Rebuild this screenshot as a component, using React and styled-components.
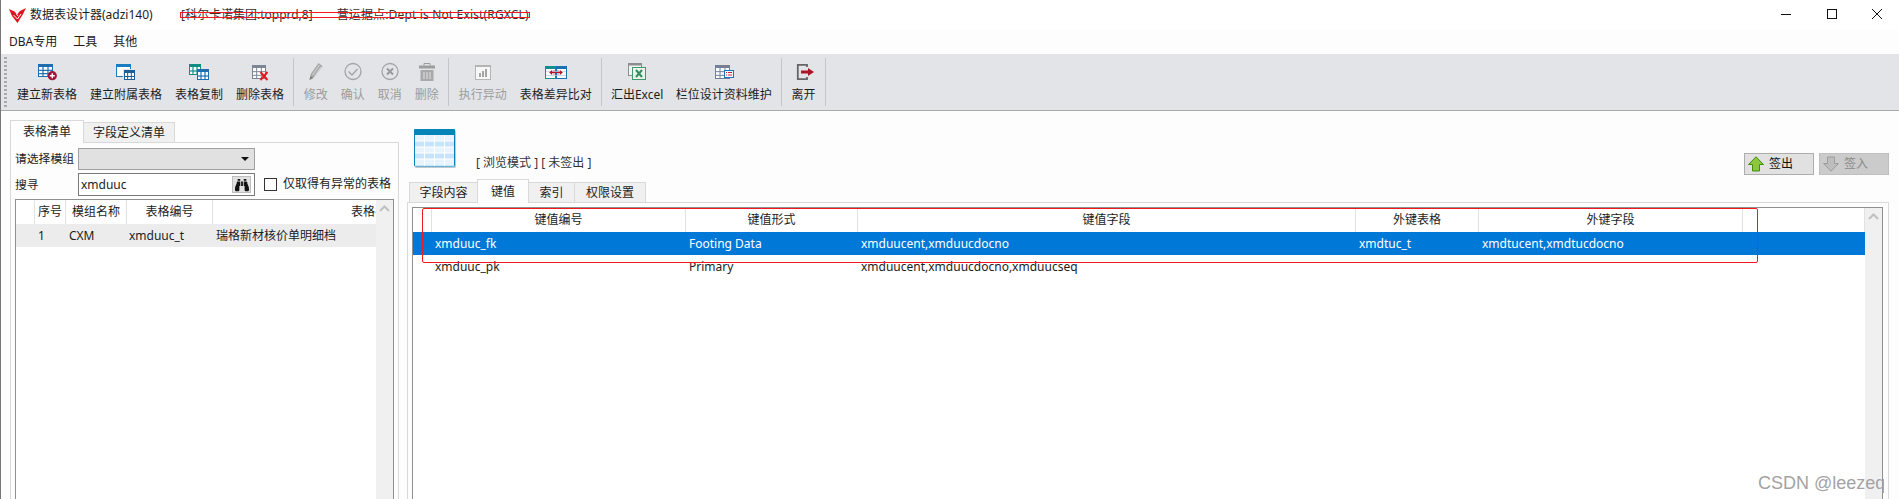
import React from 'react';
import styled, { createGlobalStyle } from 'styled-components';
import { FaBinoculars } from 'react-icons/fa';

const Global = createGlobalStyle`
  html, body { margin: 0; padding: 0; background: #fdfdfd; overflow: hidden; }
  * { box-sizing: border-box; }
`;

const Window = styled.div`
  position: relative; width: 1899px; height: 499px; overflow: hidden;
  display: flex; flex-direction: column; background: #fdfdfd;
  border-left: 1px solid #777;
  font: 12px/14px "Noto Sans", "Noto Sans CJK SC", sans-serif; color: #1c1c1c;
`;
const TitleBar = styled.div`
  height: 30px; flex: none; display: flex; align-items: center; background: #fff; padding-left: 8px;
`;
const AppTitle = styled.span`margin-left: 4px; width: 151px;`;
const TitleInfo = styled.span`margin-right: ${p => p.$gap || 0}px; color: #333; letter-spacing: ${p => p.$track || 0}px;`;
const WinControls = styled.div`margin: 0 0 2px auto; display: flex; gap: 35.5px; padding-right: 17px; align-items: center;`;
const MenuBar = styled.div`
  height: 24px; flex: none; display: flex; align-items: center; background: #fdfdfd; padding: 0 0 0 8px; gap: 16px;
`;
const MenuItem = styled.span``;
const Toolbar = styled.div`
  height: 57px; flex: none; display: flex; align-items: stretch; background: #e3e4e8;
  border-bottom: 1px solid #aaa; padding-left: 3px;
`;
const Grip = styled.div`
  width: 3px; margin: 3px 3.5px 3px 0;
  background: repeating-linear-gradient(to bottom, #a9aaad 0 2px, transparent 2px 4px);
`;
const ToolButton = styled.div`
  padding: 9px ${p => p.$pad ?? 6.5}px 0; display: flex; flex-direction: column; align-items: center;
  color: ${p => (p.$disabled ? '#9c9c9c' : '#1c1c1c')}; white-space: nowrap;
  svg { display: block; overflow: visible; }
`;
const ToolLabel = styled.span`margin-top: 7px;`;
const ToolSep = styled.div`width: 1px; height: 48px; margin: 4px 3.25px 0 2.5px; background: #c4c5c8;`;

const Body = styled.div`flex: 1; min-height: 0; display: flex; padding: 9px 0 0 9px; gap: 8px;`;
const LeftCol = styled.div`width: 389px; flex: none; display: flex; flex-direction: column;`;
const RightCol = styled.div`width: 1482px; flex: none; display: flex; flex-direction: column;`;

const Tabs = styled.div`
  display: flex; align-items: flex-end; height: ${p => p.$h}px; padding-left: ${p => p.$pad || 0}px;
  position: relative; z-index: 1; flex: none;
`;
const Tab = styled.div`
  width: ${p => p.$w}px; height: ${p => (p.$active ? p.$h + 2 : p.$h)}px;
  display: flex; align-items: center; justify-content: center;
  background: ${p => (p.$active ? '#fdfdfd' : '#f0f0f0')};
  border: 1px solid #d9d9d9; border-bottom: ${p => (p.$active ? 'none' : '1px solid #d9d9d9')};
  margin-right: -1px; ${p => (p.$active ? 'position: relative; z-index: 1;' : '')}
`;
const Panel = styled.div`
  flex: 1; min-height: 0; margin-bottom: -30px; margin-top: -1px; display: flex; flex-direction: column;
  border: 1px solid #d9d9d9; background: #fdfdfd; padding: ${p => p.$pad};
`;
const FieldRow = styled.div`
  display: flex; align-items: center; height: ${p => p.$h}px; margin-bottom: 3px; flex: none;
`;
const FieldLabel = styled.span`width: 63px; flex: none; white-space: nowrap; font-size: 11.8px; margin-bottom: 2px;`;
const Select = styled.div`
  width: 177px; height: 22px; background: #e1e1e1; border: 1px solid #a0a0a0;
  display: flex; align-items: center; justify-content: flex-end; padding-right: 5px;
`;
const Caret = styled.div`width: 0; height: 0; border: 4px solid transparent; border-top: 4px solid #111; border-bottom: none;`;
const SearchBox = styled.div`
  width: 177px; height: 23px; background: #fff; border: 1px solid #7a7a7a; display: flex; align-items: center;
  padding-left: 2px; justify-content: space-between;
`;
const SearchBtn = styled.div`
  width: 19px; height: 17px; margin-right: 3px; background: #e1e1e1; border: 1px solid #bdbdbd;
  display: flex; align-items: center; justify-content: center; color: #111;
`;
const CheckBox = styled.div`width: 13px; height: 13px; margin-left: 9px; background: #fff; border: 1px solid #333; flex: none;`;
const CheckLabel = styled.span`margin: 0 0 2px 6px; white-space: nowrap;`;

const Grid = styled.div`
  flex: 1; min-height: 0; display: flex; border: 1px solid #8e8f8f; background: #fff; overflow: hidden;
`;
const GridMain = styled.div`flex: 1; min-width: 0; overflow: hidden;`;
const ScrollBar = styled.div`
  width: 17px; flex: none; background: #f0f0f0; display: flex; justify-content: center; padding-top: 5px; align-items: flex-start;
`;
const Row = styled.div`
  display: grid; grid-template-columns: ${p => p.$cols}; height: ${p => p.$h || 23}px; align-items: center;
  background: ${p => p.$bg || 'transparent'}; color: ${p => p.$color || 'inherit'};
`;
const HeadCell = styled.div`
  height: 100%; display: flex; align-items: center; justify-content: center; white-space: nowrap;
  border-right: 1px solid #e2e2e2; overflow: hidden; color: #1c1c1c;
`;
const Cell = styled.div`padding-left: ${p => p.$pad ?? 3}px; white-space: nowrap; overflow: hidden;`;

const RightHead = styled.div`height: 59px; flex: none; display: flex; padding-left: 7px;`;
const BigIcon = styled.svg`margin-top: 9px; flex: none;`;
const ModeText = styled.span`margin: 36px 0 0 20px; color: #333; white-space: pre;`;
const CheckActions = styled.div`margin: 33px 0 0 auto; display: flex; gap: 5px;`;
const CheckBtn = styled.div`
  width: 70px; height: 22px; display: flex; align-items: center; padding-left: 3px; gap: 5px;
  background: ${p => (p.$disabled ? '#cbcbcb' : '#e1e1e1')};
  border: 1px solid ${p => (p.$disabled ? '#bfbfbf' : '#adadad')};
  color: ${p => (p.$disabled ? '#8a8a8a' : '#111')};
`;

const RedMark = styled.div`
  position: absolute; border: 1px solid #f5191e; pointer-events: none; z-index: 5;
  left: ${p => p.$x}px; top: ${p => p.$y}px; width: ${p => p.$w}px; height: ${p => p.$h}px; border-radius: ${p => p.$r || 0}px;
`;
const Watermark = styled.div`
  position: absolute; left: 1757px; top: 472px; width: 126px; overflow: hidden; white-space: nowrap; z-index: 6;
  font: 18px/22px "Liberation Sans", Arial, sans-serif; color: #a3a3a3;
`;

/* ---------- drawings ---------- */
const MiniTable = ({ x, y, w, h, c, cols = 3, rows = 2, head = 3, sw = 1 }) => {
  const v = [], r = [];
  for (let i = 1; i < cols; i++) v.push(x + (w * i) / cols);
  for (let i = 1; i < rows; i++) r.push(y + head + ((h - head) * i) / rows);
  return (
    <g>
      <rect x={x + 0.5} y={y + 0.5} width={w - 1} height={h - 1} fill="#fff" stroke={c} />
      <rect x={x} y={y} width={w} height={head} fill={c} />
      {v.map(a => <line key={a} x1={a} x2={a} y1={y + head} y2={y + h} stroke={c} strokeWidth={sw} />)}
      {r.map(a => <line key={a} x1={x} x2={x + w} y1={a} y2={a} stroke={c} strokeWidth={sw} />)}
    </g>
  );
};
const Ico = ({ children }) => <svg width="24" height="18" viewBox="0 0 24 18">{children}</svg>;

const NewTableIcon = () => <Ico>
  <MiniTable x={3} y={1} w={15} h={13} c="#1f6eb0" rows={3} sw={1.2} />
  <circle cx="17.3" cy="12.7" r="4.6" fill="#a5133a" />
  <path d="M14.800 12.700h5M17.300 10.200v5" stroke="#fff" strokeWidth="1.4" />
</Ico>;
const SubTableIcon = () => <Ico>
  <rect x="2.5" y="1.5" width="14" height="12" fill="#fff" stroke="#1b7cc0" />
  <rect x="2" y="1" width="15" height="3" fill="#1b7cc0" />
  <rect x="9" y="6" width="13" height="12" fill="#e3e4e8" />
  <MiniTable x={10} y={7} w={11} h={10} c="#1f5f99" head={3} />
</Ico>;
const CopyTableIcon = () => <Ico>
  <MiniTable x={2} y={1} w={12} h={11} c="#0f8f82" rows={2} sw={1.2} />
  <MiniTable x={10} y={6} w={12} h={11} c="#1f6eb0" rows={2} sw={1.2} />
</Ico>;
const DelTableIcon = () => <Ico>
  <MiniTable x={4} y={2} w={14} h={14} c="#7d8793" rows={3} head={3} />
  <path d="M12.500 9l7 8M19.500 9l-7 8" stroke="#e3151d" strokeWidth="1.9" />
</Ico>;
const PencilIcon = () => <Ico>
  <path d="M5.500 17l1.200-6L14.500 0 18.500 3l-7.500 10.500z" fill="#a9a9a9" />
  <path d="M5.500 17l1-4 3 2z" fill="#808080" />
  <path d="M8.500 12L15.500 2M10.500 13.500L17 4" stroke="#e3e4e8" strokeWidth=".8" />
</Ico>;
const OkIcon = () => <Ico>
  <circle cx="12" cy="8.500" r="8" fill="none" stroke="#a4a4a4" strokeWidth="1.3" />
  <path d="M7.500 8.500l3.500 3.500 5.500-6" fill="none" stroke="#a4a4a4" strokeWidth="1.4" />
</Ico>;
const CancelIcon = () => <Ico>
  <circle cx="12" cy="8.500" r="8" fill="none" stroke="#a4a4a4" strokeWidth="1.3" />
  <path d="M9 5.500l6 6M15 5.500l-6 6" stroke="#989898" strokeWidth="1.900" />
</Ico>;
const TrashIcon = () => <Ico>
  <path d="M9 2.500V.5h6v2" fill="none" stroke="#9c9c9c" />
  <rect x="4" y="2.500" width="16" height="3" fill="#9c9c9c" />
  <path d="M5.500 7h13v11h-13z" fill="#a9a9a9" />
  <path d="M9 9v7M12 9v7M15 9v7" stroke="#e3e4e8" />
</Ico>;
const ExecIcon = () => <Ico>
  <rect x="4.5" y="2.5" width="15" height="14" fill="#f7f7f7" stroke="#b4b4b4" />
  <rect x="4" y="2" width="16" height="2" fill="#b4b4b4" />
  <path d="M8 10h2v4H8zM11 8h2v6h-2zM14 6h2v8h-2z" fill="#a4a4a4" />
</Ico>;
const CompareIcon = () => <Ico>
  <rect x="1.5" y="3.5" width="10" height="12" fill="#fff" stroke="#10908c" />
  <rect x="1" y="3" width="11" height="3" fill="#10908c" />
  <rect x="12.5" y="3.5" width="10" height="12" fill="#fff" stroke="#1f6eb0" />
  <rect x="12" y="3" width="11" height="3" fill="#1f6eb0" />
  <path d="M2 8.500h20M2 12.500h20" stroke="#bcd" strokeWidth=".7" />
  <path d="M6 9.500h12" stroke="#b5152b" strokeWidth="1" />
  <path d="M8 7.500L5.500 9.500 8 11.500zM16 7.500l2.500 2-2.500 2zM10 7v5M14 7v5" fill="#b5152b" stroke="#b5152b" strokeWidth=".6" />
</Ico>;
const ExcelIcon = () => <Ico>
  <rect x="3.5" y="0.5" width="13" height="12" fill="#f3f3f3" stroke="#8d8d8d" />
  <rect x="3" y="0" width="14" height="2.5" fill="#8d8d8d" />
  <rect x="7.5" y="4.5" width="13" height="12" fill="#eaf4ee" stroke="#3f9b6e" />
  <path d="M11 7l6 7M17 7l-6 7" stroke="#2f8f5f" strokeWidth="2" />
</Ico>;
const FieldIcon = () => <Ico>
  <MiniTable x={3} y={2} w={15} h={14} c="#73809a" rows={3} cols={3} />
  <rect x="12.5" y="7.5" width="9" height="7" fill="#fff" stroke="#1574c4" />
  <path d="M14 9.500h1M16 9.500h4M14 12h1M16 12h4" stroke="#c2213c" strokeWidth="1" />
</Ico>;
const ExitIcon = () => <Ico>
  <path d="M15 4V1.800H5.800v14.400H15V14" fill="none" stroke="#666" strokeWidth="1.8" />
  <path d="M9 7.600h7V5l6 4-6 4v-2.600H9z" fill="#a8162a" />
</Ico>;
const Chevron = () => (
  <svg width="11" height="7" viewBox="0 0 11 7"><path d="M1 6l4.500-4.500L10 6" fill="none" stroke="#c0c0c0" strokeWidth="2" /></svg>
);
const Logo = () => (
  <svg width="17" height="15" viewBox="0 0 17 15">
    <path d="M0 1l5.500 2.500L8 6.500 11 3l6-3-3.500 7L8.500 15 3 8z" fill="#dc1420" />
    <path d="M4.500 7L8.500 11 12 6M7.500 6L9 8" fill="none" stroke="#fff" strokeWidth="1" />
  </svg>
);
const WinMin = () => <svg width="10" height="10"><path d="M0 5.500h10" stroke="#111" /></svg>;
const WinMax = () => <svg width="10" height="10"><rect x=".5" y=".5" width="9" height="9" fill="none" stroke="#111" /></svg>;
const WinClose = () => <svg width="10" height="10"><path d="M0 0l10 10M10 0L0 10" stroke="#111" /></svg>;
const UpArrow = () => (
  <svg width="16" height="16" viewBox="0 0 16 16"><path d="M8 .8L15.500 8.500H11.500V15H4.500V8.500H.5z" fill="#8cc63f" stroke="#3f8f10" /></svg>
);
const DownArrow = () => (
  <svg width="16" height="16" viewBox="0 0 16 16"><path d="M8 15.200L.5 7.500H4.500V1H11.500V7.500H15.500z" fill="#bdbdbd" stroke="#9c9c9c" /></svg>
);
const BigTable = () => (
  <BigIcon width="42" height="39" viewBox="0 0 42 39">
    <rect x="1" y="1" width="41" height="38" rx="1.500" fill="#9aa7ad" opacity=".6" />
    <rect x=".5" y=".5" width="40" height="37" rx="1.500" fill="#e8f4fd" stroke="#0a81b3" />
    <rect x="0" y="0" width="41" height="6" rx="1" fill="#0584b8" />
    <path d="M1 12h39v6H1zM1 24h39v6H1zM1 36h39v1.500H1z" fill="#c6e4fb" />
    <path d="M10.500 6v31M20.500 6v31M30.500 6v31M1 12h39M1 18h39M1 24h39M1 30h39" stroke="#fff" strokeWidth="1" />
  </BigIcon>
);

const tools = [
  [{ l: '建立新表格', I: NewTableIcon }, { l: '建立附属表格', I: SubTableIcon }, { l: '表格复制', I: CopyTableIcon }, { l: '删除表格', I: DelTableIcon }],
  [{ l: '修改', I: PencilIcon, d: 1 }, { l: '确认', I: OkIcon, d: 1 }, { l: '取消', I: CancelIcon, d: 1 }, { l: '删除', I: TrashIcon, d: 1 }],
  [{ l: '执行异动', I: ExecIcon, d: 1 }, { l: '表格差异比对', I: CompareIcon }],
  [{ l: '汇出Excel', I: ExcelIcon, p: 6 }, { l: '栏位设计资料维护', I: FieldIcon }],
  [{ l: '离开', I: ExitIcon }],
];

const leftCols = '19px 31px 61px 86px 325px';
const rightCols = '19px 254px 172px 498px 123px 264px 122px';

export default function App() {
  return (
    <Window>
      <Global />
      <TitleBar>
        <Logo />
        <AppTitle>数据表设计器(adzi140)</AppTitle>
        <TitleInfo $gap={24}>[科尔卡诺集团:topprd,8]</TitleInfo>
        <TitleInfo $track={0.15}>营运据点:Dept is Not Exist(RGXCL)</TitleInfo>
        <WinControls><WinMin /><WinMax /><WinClose /></WinControls>
      </TitleBar>
      <MenuBar>
        <MenuItem>DBA专用</MenuItem><MenuItem>工具</MenuItem><MenuItem>其他</MenuItem>
      </MenuBar>
      <Toolbar>
        <Grip />
        {tools.map((group, i) => (
          <React.Fragment key={i}>
            {group.map(({ l, I, d, p }) => (
              <ToolButton key={l} $disabled={!!d} $pad={p}><I /><ToolLabel>{l}</ToolLabel></ToolButton>
            ))}
            <ToolSep />
          </React.Fragment>
        ))}
      </Toolbar>
      <Body>
        <LeftCol>
          <Tabs $h={23}>
            <Tab $w={74} $h={21} $active>表格清单</Tab>
            <Tab $w={92} $h={21}>字段定义清单</Tab>
          </Tabs>
          <Panel $pad="5px 4px 0">
            <FieldRow $h={22}>
              <FieldLabel>请选择模组</FieldLabel>
              <Select><Caret /></Select>
            </FieldRow>
            <FieldRow $h={23}>
              <FieldLabel>搜寻</FieldLabel>
              <SearchBox>xmduuc<SearchBtn><FaBinoculars size={14} /></SearchBtn></SearchBox>
              <CheckBox />
              <CheckLabel>仅取得有异常的表格</CheckLabel>
            </FieldRow>
            <Grid>
              <GridMain>
                <Row $cols={leftCols} $h={24}>
                  <HeadCell /><HeadCell>序号</HeadCell><HeadCell>模组名称</HeadCell><HeadCell>表格编号</HeadCell><HeadCell>表格名称</HeadCell>
                </Row>
                <Row $cols={leftCols} $bg="#ececec">
                  <Cell /><Cell>1</Cell><Cell>CXM</Cell><Cell $pad={2}>xmduuc_t</Cell><Cell>瑞格新材核价单明细档</Cell>
                </Row>
              </GridMain>
              <ScrollBar><Chevron /></ScrollBar>
            </Grid>
          </Panel>
        </LeftCol>
        <RightCol>
          <RightHead>
            <BigTable />
            <ModeText>[ 浏览模式 ] [ 未签出 ]</ModeText>
            <CheckActions>
              <CheckBtn><UpArrow />签出</CheckBtn>
              <CheckBtn $disabled><DownArrow />签入</CheckBtn>
            </CheckActions>
          </RightHead>
          <Tabs $h={24} $pad={2}>
            <Tab $w={69} $h={21}>字段内容</Tab>
            <Tab $w={52} $h={22} $active>键值</Tab>
            <Tab $w={47} $h={21}>索引</Tab>
            <Tab $w={72} $h={21}>权限设置</Tab>
          </Tabs>
          <Panel $pad="4px 5px 0 4px">
            <Grid>
              <GridMain>
                <Row $cols={rightCols} $h={24}>
                  <HeadCell /><HeadCell>键值编号</HeadCell><HeadCell>键值形式</HeadCell><HeadCell>键值字段</HeadCell><HeadCell>外键表格</HeadCell><HeadCell>外键字段</HeadCell><HeadCell />
                </Row>
                <Row $cols={rightCols} $bg="#0078d7" $color="#fff">
                  <Cell /><Cell>xmduuc_fk</Cell><Cell>Footing Data</Cell><Cell>xmduucent,xmduucdocno</Cell><Cell>xmdtuc_t</Cell><Cell>xmdtucent,xmdtucdocno</Cell><Cell />
                </Row>
                <Row $cols={rightCols}>
                  <Cell /><Cell>xmduuc_pk</Cell><Cell>Primary</Cell><Cell>xmduucent,xmduucdocno,xmduucseq</Cell><Cell /><Cell /><Cell />
                </Row>
              </GridMain>
              <ScrollBar><Chevron /></ScrollBar>
            </Grid>
          </Panel>
        </RightCol>
      </Body>
      <RedMark $x={179} $y={12} $w={350} $h={6} />
      <RedMark $x={421} $y={208} $w={1336} $h={55} $r={2} />
      <Watermark>CSDN @leezeq</Watermark>
    </Window>
  );
}
